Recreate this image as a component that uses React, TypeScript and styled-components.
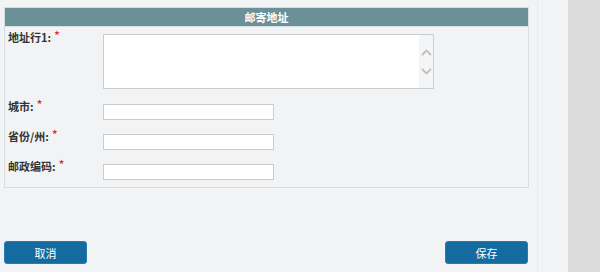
import styled, { createGlobalStyle } from "styled-components";

const GlobalStyle = createGlobalStyle`
    html, body {
        margin: 0;
        padding: 0;
        background: #f1f3f4;
    }
    body {
        font-family: "Noto Sans CJK SC", "Noto Sans", sans-serif;
        font-size: 11px;
        color: #333;
    }
`;

const Page = styled.div`
    display: flex;
    width: 600px;
    height: 272px;
    overflow: hidden;
`;

const Main = styled.div`
    width: 568px;
    background: #f1f3f4;
`;

const Column = styled.div`
    width: 538px;
    height: 272px;
    padding: 7px 0 0 4px;
    box-sizing: border-box;
    border-right: 1px solid #e8ebec;
`;

const Sidebar = styled.div`
    flex: 1;
    background: #dcdcdc;
`;

const Fieldset = styled.section`
    width: 525px;
    border: 1px solid #d6dde0;
    box-sizing: border-box;
    padding-bottom: 7px;
`;

const Legend = styled.div`
    height: 18px;
    line-height: 18px;
    background: #6a9098;
    color: #fff;
    font-weight: 700;
    text-align: center;
    border-bottom: 1px solid #d6e3e6;
`;

const Rows = styled.div`
    display: flex;
    flex-direction: column;
    gap: 8px;
    padding: 2px 0 0 3px;
`;

const Row = styled.div`
    display: grid;
    grid-template-columns: 95px 1fr;
    align-items: start;
`;

const Label = styled.label`
    line-height: 15px;
    font-weight: 700;
    color: #333;
`;

const Required = styled.span`
    color: #e5262a;
    font-size: 13px;
    font-weight: 400;
    margin-left: 3px;
    position: relative;
    top: -1px;
`;

const Input = styled.input`
    margin-top: 6px;
    width: 171px;
    height: 16px;
    box-sizing: border-box;
    border: 1px solid #c9cdcf;
    background: #fff;
    padding: 0 3px;
    font: inherit;
`;

const AreaBox = styled.div`
    margin-top: 5px;
    width: 331px;
    height: 55px;
    box-sizing: border-box;
    border: 1px solid #c9cdcf;
    background: #fff;
    display: flex;
    margin-bottom: 1px;
`;

const Area = styled.textarea`
    flex: 1;
    border: none;
    resize: none;
    outline: none;
    font: inherit;
    padding: 2px;
    background: transparent;
`;

const ScrollBar = styled.div`
    width: 14px;
    background: #f3f5f6;
    display: flex;
    flex-direction: column;
    align-items: center;
    gap: 12px;
    padding-top: 14px;
`;

const ButtonBar = styled.div`
    display: flex;
    justify-content: space-between;
    width: 524px;
    margin-top: 53px;
`;

const Button = styled.button`
    width: 83px;
    height: 23px;
    border: 1px solid #2a7bb0;
    border-radius: 3px;
    background: #136ba0;
    color: #fff;
    font: inherit;
    font-size: 11px;
    cursor: pointer;
    padding: 0;
`;

const Chevron = (props: { up?: boolean }) => (
    <svg width="11" height="7" viewBox="0 0 11 7">
        <path
            d={props.up ? "M1 6 L5.5 1.5 L10 6" : "M1 1 L5.5 5.5 L10 1"}
            fill="none"
            stroke="#c0c0c0"
            strokeWidth="1.8"
        />
    </svg>
);

const fields = [
    { id: "city", label: "城市:" },
    { id: "state", label: "省份/州:" },
    { id: "zip", label: "邮政编码:" },
];

const App = () => {
    return (
        <>
            <GlobalStyle />
            <Page>
                <Main>
                    <Column>
                        <Fieldset>
                            <Legend>邮寄地址</Legend>
                            <Rows>
                                <Row>
                                    <Label htmlFor="line1">
                                        地址行1:<Required>*</Required>
                                    </Label>
                                    <AreaBox>
                                        <Area id="line1" />
                                        <ScrollBar>
                                            <Chevron up />
                                            <Chevron />
                                        </ScrollBar>
                                    </AreaBox>
                                </Row>
                                {fields.map((f) => (
                                    <Row key={f.id}>
                                        <Label htmlFor={f.id}>
                                            {f.label}
                                            <Required>*</Required>
                                        </Label>
                                        <Input id={f.id} />
                                    </Row>
                                ))}
                            </Rows>
                        </Fieldset>
                        <ButtonBar>
                            <Button>取消</Button>
                            <Button>保存</Button>
                        </ButtonBar>
                    </Column>
                </Main>
                <Sidebar />
            </Page>
        </>
    );
};

export default App;
